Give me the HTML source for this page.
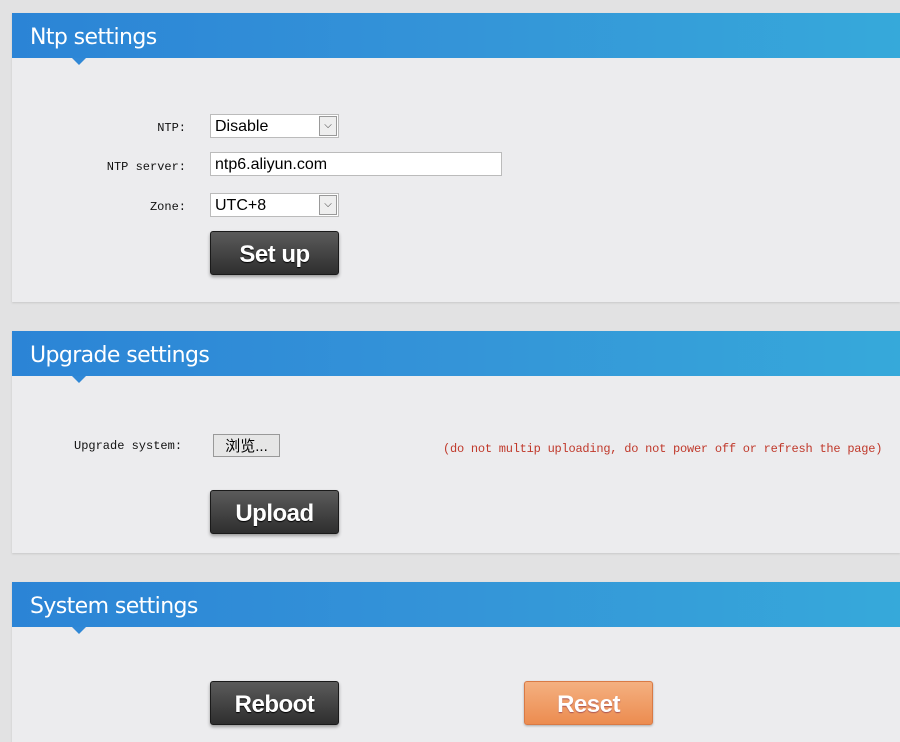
<!DOCTYPE html>
<html><head><meta charset="utf-8"><style>
body{margin:0;width:900px;height:730px;background:#e2e2e3;position:relative;overflow:hidden;font-family:"Liberation Sans","Noto Sans CJK SC",sans-serif}
.p{position:absolute;left:12px;width:888px;background:#ececee;box-shadow:0 1px 2px #c8c8c8}
.h{position:absolute;left:0;top:0;width:100%;height:45px;background:linear-gradient(90deg,#2b84d6,#3494d8 50%,#36a9da);color:#fff;font-size:22px;line-height:49px;font-family:"DejaVu Sans",sans-serif;font-weight:normal}
.h span{margin-left:18px;letter-spacing:-0.6px}
.h i{position:absolute;left:60px;top:45px;border-left:7px solid transparent;border-right:7px solid transparent;border-top:7px solid #3088d6}
.a{position:absolute}
.l{font-family:"Liberation Mono",monospace;font-size:12px;color:#111;text-align:right}
.sel{background:#fff;border:1px solid #bbb;font-size:16px;line-height:24px;padding-left:4px;box-sizing:border-box;height:24px}
.sel b{position:absolute;right:1px;top:1px;width:18px;height:20px;border:1px solid #999;background:#eee;box-sizing:border-box;font-weight:normal;font-size:10px;text-align:center;line-height:18px;color:#333}
.btn{background:linear-gradient(#5b5b5b,#2e2e2e);border:1px solid #1a1a1a;border-radius:3px;color:#fff;font-weight:bold;font-size:24px;text-align:center;line-height:46px;width:127px;height:42px;box-shadow:0 2px 3px #999;text-shadow:0 1px 1px #000;letter-spacing:-0.5px}
</style></head><body>
<div class="p" style="top:13px;height:289px">
<div class="h"><span>Ntp settings</span><i></i></div>
<div class="a l" style="left:0;width:174px;top:108px">NTP:</div>
<div class="a sel" style="left:198px;top:101px;width:129px">Disable<b>⌵</b></div>
<div class="a l" style="left:0;width:174px;top:147px">NTP server:</div>
<div class="a sel" style="left:198px;top:139px;width:292px">ntp6.aliyun.com</div>
<div class="a l" style="left:0;width:174px;top:187px">Zone:</div>
<div class="a sel" style="left:198px;top:180px;width:129px">UTC+8<b>⌵</b></div>
<div class="a btn" style="left:198px;top:218px">Set up</div>
</div>
<div class="p" style="top:331px;height:222px">
<div class="h"><span>Upgrade settings</span><i></i></div>
<div class="a l" style="left:62px;top:108px;text-align:left">Upgrade system:</div>
<div class="a" style="left:201px;top:103px;width:67px;height:23px;border:1px solid #999;background:#e6e6e6;font-size:15px;line-height:23px;text-align:center;box-sizing:border-box">浏览...</div>
<div class="a l" style="left:431px;top:111px;color:#c0392b;text-align:left;letter-spacing:-0.23px">(do not multip uploading, do not power off or refresh the page)</div>
<div class="a btn" style="left:198px;top:159px">Upload</div>
</div>
<div class="p" style="top:582px;height:160px">
<div class="h"><span>System settings</span><i></i></div>
<div class="a btn" style="left:198px;top:99px">Reboot</div>
<div class="a btn" style="left:512px;top:99px;background:linear-gradient(#f4b080,#ec8c50);border-color:#d97a45;box-shadow:0 1px 2px #aaa;text-shadow:0 1px 1px #a55">Reset</div>
</div>
</body></html>
